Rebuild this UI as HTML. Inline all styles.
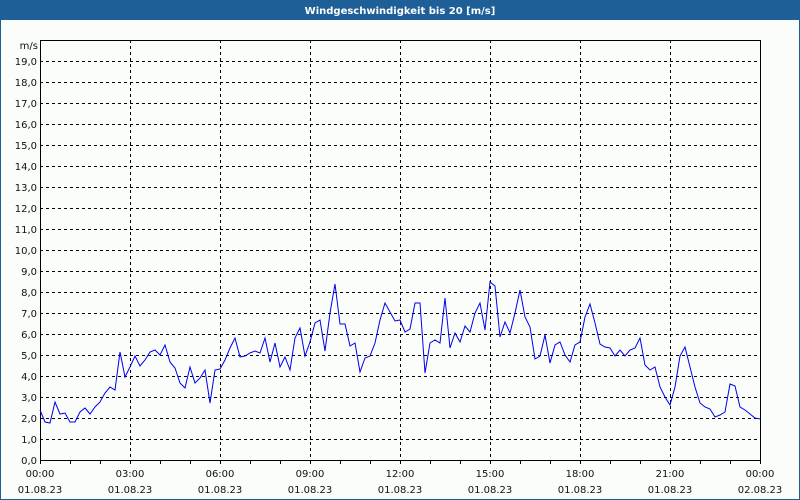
<!DOCTYPE html>
<html><head><meta charset="utf-8"><style>
body{margin:0;width:800px;height:500px;overflow:hidden;background:#fbfdfb;font-family:"DejaVu Sans","Liberation Sans",sans-serif}
svg{display:block}
text{font-family:"DejaVu Sans","Liberation Sans",sans-serif;font-size:10px;fill:#111}
</style></head><body>
<svg width="800" height="500" xmlns="http://www.w3.org/2000/svg">
<rect x="0" y="0" width="800" height="500" fill="#fbfdfb"/>
<rect x="0.5" y="0.5" width="799" height="499" fill="none" stroke="#1e5f97" stroke-width="1"/>
<rect x="0" y="0" width="800" height="20" fill="#1e5f97"/>
<text x="400" y="14" text-anchor="middle" style="fill:#fff;font-weight:bold;font-size:10px">Windgeschwindigkeit bis 20 [m/s]</text>
<g stroke="#000" stroke-width="1" stroke-dasharray="3,3" fill="none">
<path d="M40 61.5H760M40 82.5H760M40 103.5H760M40 124.5H760M40 145.5H760M40 166.5H760M40 187.5H760M40 208.5H760M40 229.5H760M40 250.5H760M40 271.5H760M40 292.5H760M40 313.5H760M40 334.5H760M40 355.5H760M40 376.5H760M40 397.5H760M40 418.5H760M40 439.5H760"/>
<path d="M130.5 40V460M220.5 40V460M310.5 40V460M400.5 40V460M490.5 40V460M580.5 40V460M670.5 40V460"/>
</g>
<rect x="40.5" y="40.5" width="720" height="420" fill="none" stroke="#000" stroke-width="1"/>
<g stroke="#000" stroke-width="1">
<path d="M40.5 460v4M70.5 460v4M100.5 460v4M130.5 460v4M160.5 460v4M190.5 460v4M220.5 460v4M250.5 460v4M280.5 460v4M310.5 460v4M340.5 460v4M370.5 460v4M400.5 460v4M430.5 460v4M460.5 460v4M490.5 460v4M520.5 460v4M550.5 460v4M580.5 460v4M610.5 460v4M640.5 460v4M670.5 460v4M700.5 460v4M730.5 460v4M760.5 460v4"/>
</g>
<polyline fill="none" stroke="#0000ee" stroke-width="1" points="40,410 45,422 50,423 55,402 60,414 65,413 70,422 75,422 80,412 85,408 90,414 95,407 100,402 105,393 110,387 115,390 120,352 125,377 130,367 135,356 140,366 145,360 150,352 155,350 160,355 165,345 170,362 175,368 180,383 185,388 190,367 195,383 200,378 205,370 210,403 215,370 220,369 225,360 230,348 235,338 240,357 245,356 250,353 255,351 260,353 265,338 270,362 275,343 280,367 285,357 290,370 295,338 300,328 305,356 310,342 315,323 320,320 325,351 330,313 335,284 340,324 345,324 350,346 355,343 360,372 365,358 370,356 375,343 380,320 385,303 390,312 395,321 400,320 405,332 410,329 415,303 420,303 425,373 430,343 435,340 440,343 445,298 450,348 455,333 460,342 465,326 470,332 475,313 480,303 485,330 490,282 495,286 500,337 505,322 510,333 515,313 520,290 525,317 530,327 535,359 540,356 545,335 550,363 555,345 560,342 565,355 570,362 575,345 580,342 585,317 590,304 595,323 600,344 605,347 610,348 615,356 620,350 625,356 630,350 635,348 640,338 645,365 650,370 655,367 660,387 665,397 670,405 675,387 680,356 685,347 690,367 695,387 700,403 705,407 710,409 715,417 720,415 725,412 730,384 735,386 740,407 745,410 750,414 755,418 760,419"/>
<g text-anchor="end">
<text x="38" y="49">m/s</text>
<text x="37" y="65">19,0</text><text x="37" y="86">18,0</text><text x="37" y="107">17,0</text><text x="37" y="128">16,0</text><text x="37" y="149">15,0</text><text x="37" y="170">14,0</text><text x="37" y="191">13,0</text><text x="37" y="212">12,0</text><text x="37" y="233">11,0</text><text x="37" y="254">10,0</text><text x="37" y="275">9,0</text><text x="37" y="296">8,0</text><text x="37" y="317">7,0</text><text x="37" y="338">6,0</text><text x="37" y="359">5,0</text><text x="37" y="380">4,0</text><text x="37" y="401">3,0</text><text x="37" y="422">2,0</text><text x="37" y="443">1,0</text><text x="37" y="464">0,0</text>
</g>
<g text-anchor="middle">
<text x="40" y="477">00:00</text><text x="40" y="493">01.08.23</text>
<text x="130" y="477">03:00</text><text x="130" y="493">01.08.23</text>
<text x="220" y="477">06:00</text><text x="220" y="493">01.08.23</text>
<text x="310" y="477">09:00</text><text x="310" y="493">01.08.23</text>
<text x="400" y="477">12:00</text><text x="400" y="493">01.08.23</text>
<text x="490" y="477">15:00</text><text x="490" y="493">01.08.23</text>
<text x="580" y="477">18:00</text><text x="580" y="493">01.08.23</text>
<text x="670" y="477">21:00</text><text x="670" y="493">01.08.23</text>
<text x="760" y="477">00:00</text><text x="760" y="493">02.08.23</text>
</g>
</svg>
</body></html>
